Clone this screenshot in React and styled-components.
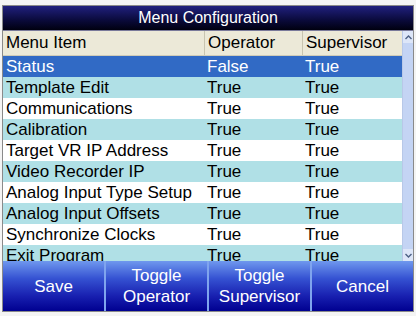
import React, { useState } from "react";
import styled, { createGlobalStyle } from "styled-components";

const GlobalStyle = createGlobalStyle`
  body {
    margin: 0;
    background: #ffffff;
    font-family: "Liberation Sans", Arial, sans-serif;
  }
`;

const Screen = styled.div`
  width: 416px;
  height: 316px;
  padding: 5px 2px 4px 2px;
  box-sizing: border-box;
  background: #f4f4f4;
`;

const Frame = styled.div`
  height: 100%;
  display: flex;
  flex-direction: column;
  border: 1px solid #8a8a8a;
  box-sizing: border-box;
  background: #ffffff;
`;

const TitleBar = styled.div`
  height: 24px;
  flex: none;
  display: flex;
  align-items: center;
  justify-content: center;
  background: linear-gradient(#20207e, #0a0a3a 60%, #000010);
  color: #ffffff;
  font-size: 16px;
`;

const Body = styled.div`
  flex: 1;
  min-height: 0;
  display: flex;
  border-top: 1px solid #7a7a9a;
`;

const Table = styled.div`
  flex: 1;
  min-width: 0;
  overflow: hidden;
`;

const Row = styled.div`
  display: grid;
  grid-template-columns: 201px 98px 1fr;
  height: ${(p) => (p.$header ? "24px" : "21px")};
  align-items: center;
  font-size: 17px;
  color: ${(p) => (p.$selected ? "#ffffff" : "#000000")};
  background: ${(p) =>
    p.$header ? "#ece9d8" : p.$selected ? "#316ac5" : p.$alt ? "#b0e0e6" : "#ffffff"};
  border-bottom: ${(p) => (p.$header ? "1px solid #d0ccb8" : "none")};
  cursor: ${(p) => (p.$header ? "default" : "pointer")};
`;

const Cell = styled.div`
  height: 100%;
  display: flex;
  align-items: center;
  padding-left: 3px;
  white-space: nowrap;
  overflow: hidden;
  border-left: ${(p) => (p.$first ? "none" : p.$header ? "1px solid #c8c4b0" : "none")};
`;

const ScrollBar = styled.div`
  width: 10px;
  flex: none;
  display: flex;
  flex-direction: column;
  background: #cddcf8;
  border-left: 1px solid #b8c8e8;
`;

const ScrollArrow = styled.div`
  height: 12px;
  display: flex;
  align-items: center;
  justify-content: center;
  background: #dde6f8;
`;

const ScrollTrack = styled.div`
  flex: 1;
  background: #c4d4f4;
`;

const ButtonBar = styled.div`
  height: 50px;
  flex: none;
  display: grid;
  grid-template-columns: repeat(4, 1fr);
  background: #7fa4ee;
  gap: 2px;
`;

const Button = styled.button`
  border: none;
  margin: 0;
  padding: 0;
  color: #ffffff;
  font-family: "Liberation Sans", Arial, sans-serif;
  font-size: 17px;
  line-height: 21px;
  background: linear-gradient(#6f98ee, #3552d2 35%, #1820b0 70%, #000090);
  cursor: pointer;
`;

const items = [
  ["Status", false, true],
  ["Template Edit", true, true],
  ["Communications", true, true],
  ["Calibration", true, true],
  ["Target VR IP Address", true, true],
  ["Video Recorder IP", true, true],
  ["Analog Input Type Setup", true, true],
  ["Analog Input Offsets", true, true],
  ["Synchronize Clocks", true, true],
  ["Exit Program", true, true],
];

function Arrow({ down }) {
  return (
    <svg width="7" height="5" viewBox="0 0 7 5">
      <path
        d={down ? "M0.5 1 L3.5 4 L6.5 1" : "M0.5 4 L3.5 1 L6.5 4"}
        fill="none"
        stroke="#4d6185"
        strokeWidth="1.4"
      />
    </svg>
  );
}

export default function App() {
  const [rows, setRows] = useState(items);
  const [selected, setSelected] = useState(0);

  const toggle = (col) => {
    setRows((r) =>
      r.map((row, i) => {
        if (i !== selected) return row;
        const next = [...row];
        next[col] = !next[col];
        return next;
      })
    );
  };

  return (
    <Screen>
      <GlobalStyle />
      <Frame>
        <TitleBar>Menu Configuration</TitleBar>
        <Body>
          <Table>
            <Row $header>
              <Cell $first $header>Menu Item</Cell>
              <Cell $header>Operator</Cell>
              <Cell $header>Supervisor</Cell>
            </Row>
            {rows.map(([name, op, sup], i) => (
              <Row
                key={name}
                $alt={i % 2 === 1}
                $selected={i === selected}
                onClick={() => setSelected(i)}
              >
                <Cell $first>{name}</Cell>
                <Cell>{op ? "True" : "False"}</Cell>
                <Cell>{sup ? "True" : "False"}</Cell>
              </Row>
            ))}
          </Table>
          <ScrollBar>
            <ScrollArrow>
              <Arrow />
            </ScrollArrow>
            <ScrollTrack />
            <ScrollArrow>
              <Arrow down />
            </ScrollArrow>
          </ScrollBar>
        </Body>
        <ButtonBar>
          <Button>Save</Button>
          <Button onClick={() => toggle(1)}>
            Toggle
            <br />
            Operator
          </Button>
          <Button onClick={() => toggle(2)}>
            Toggle
            <br />
            Supervisor
          </Button>
          <Button>Cancel</Button>
        </ButtonBar>
      </Frame>
    </Screen>
  );
}
